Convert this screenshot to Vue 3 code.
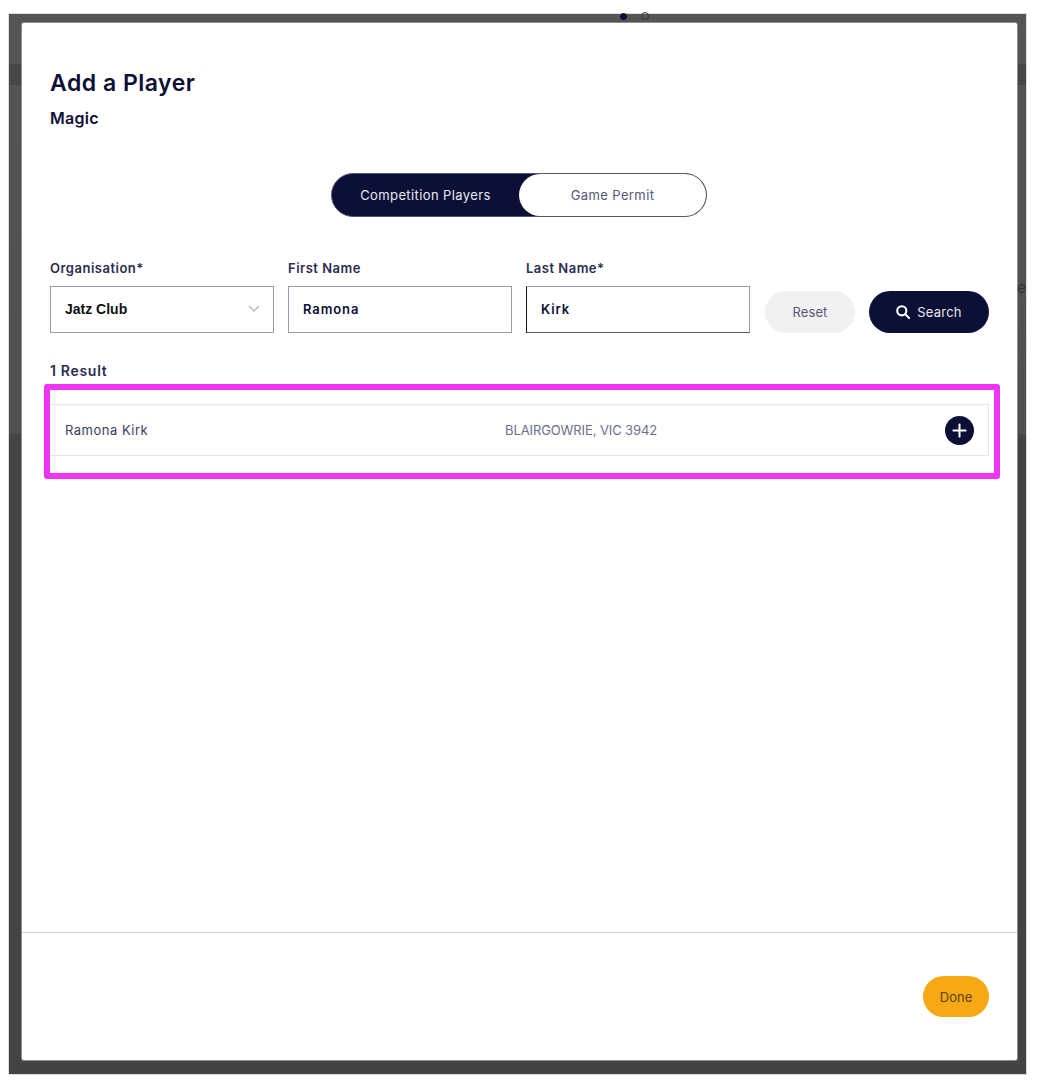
<template>
  <div class="page">
    <div class="backdrop">
      <div class="dots"><span class="dot on"></span><span class="dot"></span></div>
      <span class="detras">e</span>
      <div class="modal">
        <div class="modal-body">
          <h1 class="titulo">Add a Player</h1>
          <h2 class="equipo">Magic</h2>

          <div class="toggle">
            <button class="toggle-btn active">Competition Players</button>
            <button class="toggle-btn">Game Permit</button>
          </div>

          <form class="filtros" @submit.prevent>
            <div class="campo">
              <label>Organisation*</label>
              <div class="select">
                <span>Jatz Club</span>
                <svg width="12" height="7" viewBox="0 0 12 7" fill="none" stroke="#b9bac4" stroke-width="1.4">
                  <path d="M1 1l5 5 5-5" />
                </svg>
              </div>
            </div>
            <div class="campo">
              <label>First Name</label>
              <input value="Ramona" type="text" />
            </div>
            <div class="campo">
              <label>Last Name*</label>
              <input class="foco" value="Kirk" type="text" />
            </div>
            <button type="button" class="btn reset">Reset</button>
            <button type="submit" class="btn search">
              <svg width="14" height="14" viewBox="0 0 15 15" fill="none" stroke="#fff" stroke-width="2.2">
                <circle cx="6.2" cy="6.2" r="4.9" />
                <path d="M9.8 9.8l4.2 4.2" stroke-linecap="round" />
              </svg>
              Search
            </button>
          </form>

          <p class="resultados">1 Result</p>

          <div class="marca">
            <div class="fila">
              <span class="nombre">Ramona Kirk</span>
              <span class="lugar">BLAIRGOWRIE, VIC 3942</span>
              <button class="add" aria-label="Add">
                <svg width="15" height="15" viewBox="0 0 16 16" stroke="#fff" stroke-width="2.2" stroke-linecap="round">
                  <path d="M8 1.5v13M1.5 8h13" />
                </svg>
              </button>
            </div>
          </div>
        </div>

        <div class="modal-footer">
          <button class="btn done">Done</button>
        </div>
      </div>
    </div>
  </div>
</template>

<script setup>
</script>

<style scoped>
.page {
  height: 1081px;
  box-sizing: border-box;
  padding: 14px 22px 7px 9px;
  background: #fff;
  font-family: "Inter", "Liberation Sans", sans-serif;
  color: #0c0f36;
}

.backdrop {
  position: relative;
  height: 100%;
  box-sizing: border-box;
  padding: 9px 9px 14px 13px;
  box-shadow: 0 0 0 1px #dcdcdc;
  background: linear-gradient(#555 0, #555 50px, #474747 50px, #474747 71px, #535353 71px, #505050 420px, #444 420px, #434343 100%);
}

.dots {
  position: absolute;
  top: -2px;
  left: 611px;
  display: flex;
  align-items: center;
  gap: 14px;
}

.dot {
  width: 8px;
  height: 8px;
  border-radius: 50%;
  border: 1px solid #333;
  box-sizing: border-box;
}

.dot.on {
  width: 7px;
  height: 7px;
  background: #0c0f36;
  border-color: #0c0f36;
}

.detras {
  position: absolute;
  top: 265px;
  right: 0;
  width: 9px;
  overflow: hidden;
  font-size: 15px;
  line-height: 18px;
  text-align: right;
  color: #333;
}

.modal {
  height: 100%;
  display: flex;
  flex-direction: column;
  background: #fff;
  border-radius: 2px;
  box-shadow: 0 0 0 1px #8f8f8f;
}

.modal-body {
  flex: 1;
  padding: 46px 28px 0 28px;
}

.titulo {
  margin: 0;
  font-size: 23px;
  line-height: 28px;
  font-weight: 600;
  letter-spacing: 0.5px;
}

.equipo {
  margin: 11px 0 0;
  font-size: 16px;
  line-height: 20px;
  font-weight: 600;
  letter-spacing: 0.3px;
}

.toggle {
  width: 376px;
  height: 44px;
  box-sizing: border-box;
  margin: 45px 0 0 281px;
  display: flex;
  border: 1px solid #55577a;
  border-radius: 22px;
  background: #0c0f36;
}

.toggle-btn {
  border: none;
  background: none;
  padding: 0;
  font-family: inherit;
  font-size: 13px;
  letter-spacing: 0.4px;
  color: #e9e9ef;
  flex: 1 1 187px;
}

.toggle-btn:last-child {
  flex: 0 0 187px;
  background: #fff;
  color: #55577a;
  border-radius: 22px;
}

.filtros {
  margin-top: 43px;
  display: flex;
  align-items: flex-end;
  gap: 14px;
}

.campo {
  width: 224px;
  display: flex;
  flex-direction: column;
}

.campo label {
  margin-bottom: 10px;
  font-size: 13px;
  line-height: 16px;
  font-weight: 600;
  letter-spacing: 0.5px;
  color: #2a2c50;
}

.campo input,
.select {
  height: 47px;
  box-sizing: border-box;
  padding: 0 14px 2px;
  border: 1.5px solid #9a9bb0;
  background: #fff;
  font-family: inherit;
  font-size: 13px;
  font-weight: 600;
  letter-spacing: 0.9px;
  color: #0c0f36;
  outline: none;
}

.select {
  display: flex;
  align-items: center;
  justify-content: space-between;
  font-family: "Liberation Sans", sans-serif;
  font-weight: 700;
  letter-spacing: 0;
  color: #111;
  font-size: 14px;
}

.select svg {
  margin-right: -1px;
}

.campo input.foco {
  border-left-color: #0c0f36;
  border-bottom-color: #55577a;
}

.btn {
  height: 42px;
  border: none;
  border-radius: 21px;
  font-family: inherit;
  font-size: 13px;
}

.reset {
  width: 90px;
  margin-left: 1px;
  background: #f1f1f1;
  color: #55577a;
  letter-spacing: 0.1px;
}

.search {
  width: 120px;
  background: #0c0f36;
  color: #e9e9ef;
  letter-spacing: 0.2px;
  display: flex;
  align-items: center;
  justify-content: center;
  gap: 7px;
}

.resultados {
  margin: 29px 0 0;
  font-size: 14px;
  line-height: 18px;
  font-weight: 600;
  letter-spacing: 0.7px;
  color: #2a2c50;
}

.marca {
  margin: 4px 0 0 -6px;
  width: 956px;
  height: 95px;
  box-sizing: border-box;
  padding: 14px 0 0 0;
  border: 6px solid #f034f5;
  border-radius: 3px;
}

.fila {
  height: 52px;
  box-sizing: border-box;
  margin-right: 5px;
  padding: 0 14px 0 15px;
  display: grid;
  grid-template-columns: 440px 1fr 29px;
  align-items: center;
  border: 1px solid #e6e6e6;
  border-left: none;
  font-size: 13px;
  color: #55577a;
}

.nombre {
  color: #3b3d5f;
  letter-spacing: 0.5px;
}

.lugar {
  color: #6d6f8a;
  letter-spacing: -0.1px;
}

.add {
  width: 29px;
  height: 29px;
  padding: 0;
  border: none;
  border-radius: 50%;
  background: #0c0f36;
  display: flex;
  align-items: center;
  justify-content: center;
}

.modal-footer {
  height: 128px;
  box-sizing: border-box;
  padding: 43px 28px 0 0;
  display: flex;
  justify-content: flex-end;
  align-items: flex-start;
  border-top: 1px solid #d2d2d2;
}

.done {
  width: 66px;
  height: 41px;
  background: #f6a915;
  color: #5a4310;
}
</style>
